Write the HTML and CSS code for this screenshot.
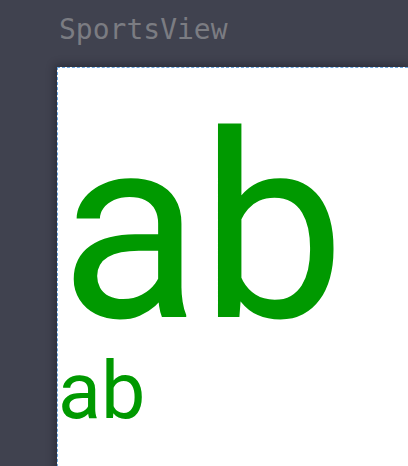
FILE: index.html
```html
<!DOCTYPE html>
<html>
<head>
<meta charset="utf-8">
<link rel="stylesheet" href="styles.css">
</head>
<body>
<div class="frame">
  <div class="title">SportsView</div>
  <div class="panel">
    <div class="big">ab</div>
    <div class="small">ab</div>
  </div>
</div>
</body>
</html>
```
FILE: styles.css
```css
html, body {
  margin: 0;
  padding: 0;
  background: #40424f;
  width: 408px;
  height: 466px;
  overflow: hidden;
}
.frame {
  display: flex;
  flex-direction: column;
  padding-left: 57px;
}
.title {
  font-family: "DejaVu Sans Mono", "Liberation Mono", monospace;
  font-size: 28px;
  line-height: 32px;
  color: #7b7c82;
  padding-top: 14px;
  padding-left: 2px;
  height: 67px;
  box-sizing: border-box;
}
.panel {
  background: #ffffff;
  border-top: 1px dashed #6aa6e0;
  border-left: 1px dashed #6aa6e0;
  box-shadow: 0 0 8px 2px rgba(20, 20, 30, 0.45);
  height: 420px;
  padding-top: 51px;
  box-sizing: border-box;
  font-family: Roboto, "Noto Sans", sans-serif;
  color: #009900;
}
.big {
  font-size: 258px;
  line-height: 220px;
  padding-left: 2px;
  white-space: nowrap;
}
.small {
  font-size: 79px;
  line-height: 105px;
  white-space: nowrap;
}
```
